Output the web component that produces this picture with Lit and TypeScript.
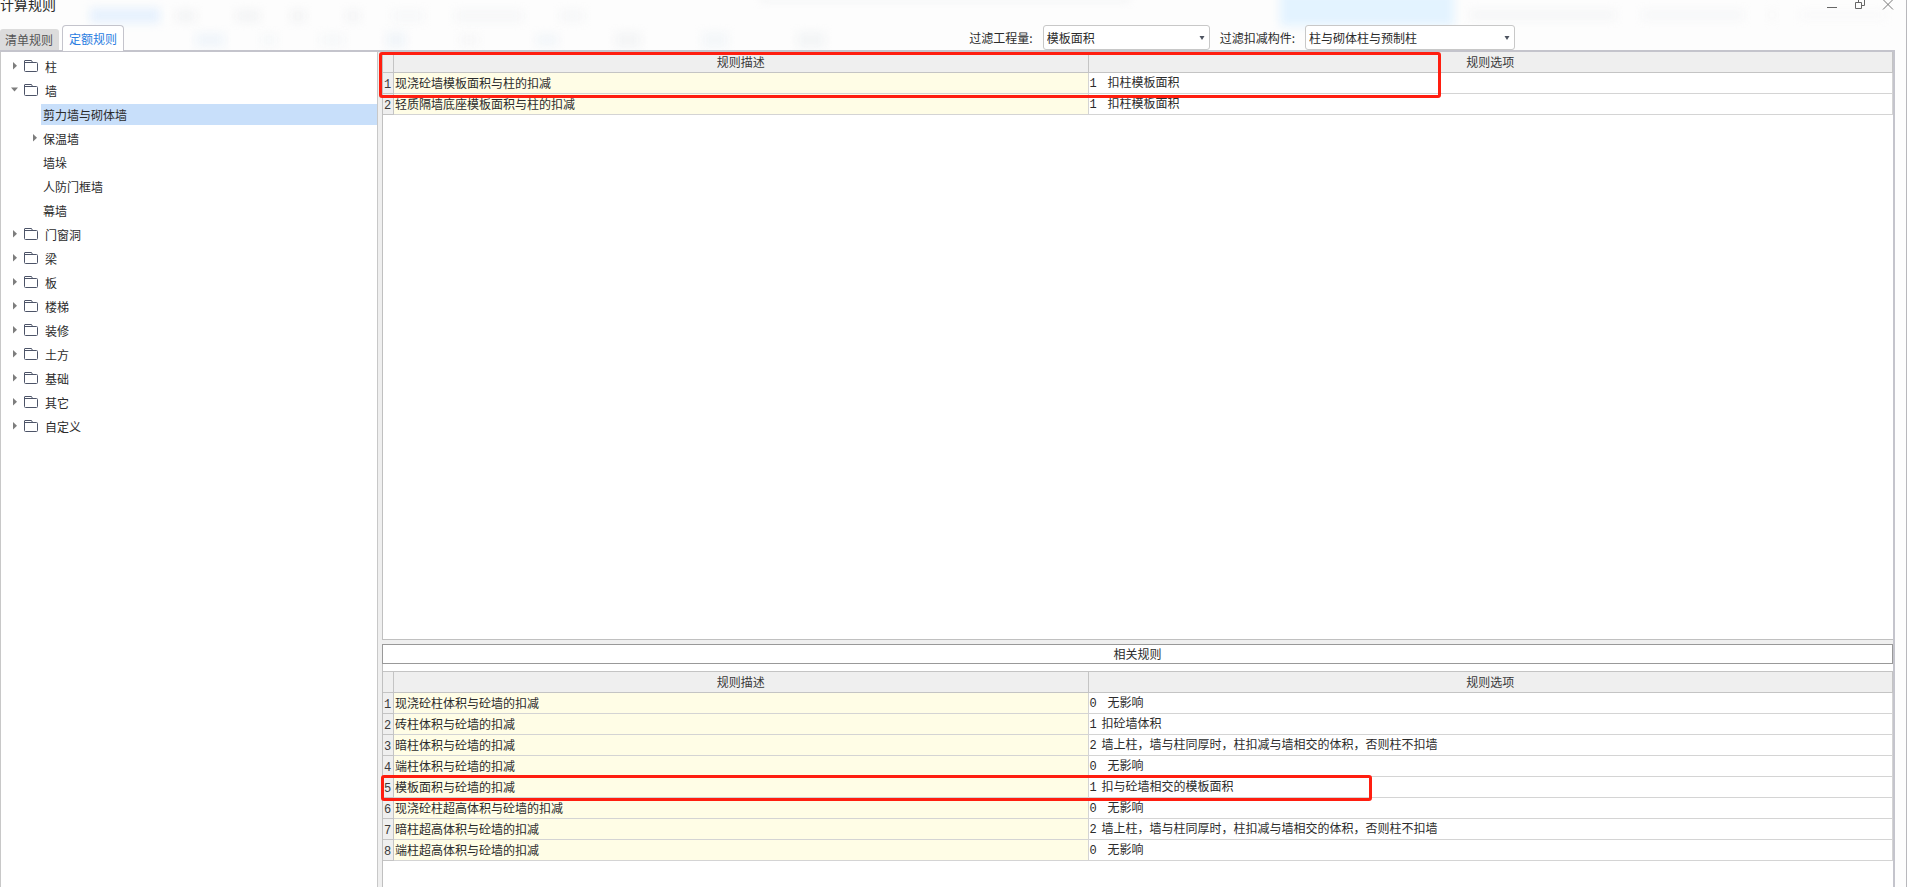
import { LitElement, html, css, svg, nothing } from "lit";
import { customElement, property, state } from "lit/decorators.js";
import { classMap } from "lit/directives/class-map.js";

interface TreeItem {
  label: string;
  children?: TreeItem[];
  expandable?: boolean;
  open?: boolean;
}

interface Rule {
  text: string;
  code: string;
  option: string;
  wide?: boolean;
}

const TREE: TreeItem[] = [
  { label: "柱" },
  {
    label: "墙",
    open: true,
    children: [
      { label: "剪力墙与砌体墙" },
      { label: "保温墙", expandable: true },
      { label: "墙垛" },
      { label: "人防门框墙" },
      { label: "幕墙" },
    ],
  },
  { label: "门窗洞" },
  { label: "梁" },
  { label: "板" },
  { label: "楼梯" },
  { label: "装修" },
  { label: "土方" },
  { label: "基础" },
  { label: "其它" },
  { label: "自定义" },
];

const RULES: Rule[] = [
  { text: "现浇砼墙模板面积与柱的扣减", code: "1", option: "扣柱模板面积", wide: true },
  { text: "轻质隔墙底座模板面积与柱的扣减", code: "1", option: "扣柱模板面积", wide: true },
];

const LONG_OPTION = "墙上柱\uff0c墙与柱同厚时\uff0c柱扣减与墙相交的体积\uff0c否则柱不扣墙";

const RELATED: Rule[] = [
  { text: "现浇砼柱体积与砼墙的扣减", code: "0", option: "无影响", wide: true },
  { text: "砖柱体积与砼墙的扣减", code: "1", option: "扣砼墙体积" },
  { text: "暗柱体积与砼墙的扣减", code: "2", option: LONG_OPTION },
  { text: "端柱体积与砼墙的扣减", code: "0", option: "无影响", wide: true },
  { text: "模板面积与砼墙的扣减", code: "1", option: "扣与砼墙相交的模板面积" },
  { text: "现浇砼柱超高体积与砼墙的扣减", code: "0", option: "无影响", wide: true },
  { text: "暗柱超高体积与砼墙的扣减", code: "2", option: LONG_OPTION },
  { text: "端柱超高体积与砼墙的扣减", code: "0", option: "无影响", wide: true },
];

// Soft shapes showing through the translucent title area: x, y, width, height, colour.
const HAZE: [number, number, number, number, string][] = [
  [90, 8, 70, 15, "#e6f1fd"],
  [176, 10, 20, 12, "#f3f4f5"],
  [236, 10, 24, 12, "#f3f4f5"],
  [291, 10, 14, 12, "#f3f4f5"],
  [346, 10, 14, 12, "#f4f5f6"],
  [392, 10, 32, 12, "#f7f8f9"],
  [455, 10, 68, 12, "#f6f7f8"],
  [560, 10, 24, 12, "#f6f7f8"],
  [196, 33, 28, 14, "#f0f5fa"],
  [262, 34, 14, 12, "#f6f8fa"],
  [320, 34, 24, 12, "#f6f8f9"],
  [386, 32, 20, 16, "#f1f5f9"],
  [460, 34, 18, 12, "#f7f7f8"],
  [536, 34, 22, 12, "#f2f6f9"],
  [615, 32, 26, 16, "#f4f5f6"],
  [702, 32, 26, 16, "#f4f7f9"],
  [797, 32, 28, 16, "#f3f5f6"],
  [760, -4, 370, 5, "#f2f3f4"],
  [1280, -8, 174, 34, "#e3f3ff"],
  [1470, 10, 146, 10, "#f5f6f7"],
  [1642, 10, 102, 10, "#f6f7f8"],
  [1768, 11, 8, 8, "#f8f8f8"],
  [1800, 11, 85, 8, "#f9f9fa"],
];

const FONT = css`"Noto Sans CJK SC", sans-serif`;

@customElement("rule-tree")
export class RuleTree extends LitElement {
  @property({ attribute: false }) items: TreeItem[] = [];
  @state() private selected = "剪力墙与砌体墙";

  static styles = css`
    :host { display: block; padding-top: 2px; background: #fff; }
    ul { list-style: none; margin: 0; padding: 0; }
    .row {
      display: flex; align-items: center; width: 100%; height: 24px; padding: 0 0 0 10px;
      border: 0; background: none; color: #2b2b2b; font: 12px/20px ${FONT}; text-align: left;
    }
    .row.child { padding-left: 30px; }
    .arrow { width: 6px; height: 8px; flex: none; }
    .folder { width: 16px; height: 14px; flex: none; margin: 0 6px; }
    .label { flex: 1; height: 21px; line-height: 21px; }
    .child .label { margin-left: 4px; padding-left: 2px; }
    .selected .label { background: #c8dffa; }
  `;

  private arrow(visible: boolean, open: boolean) {
    return svg`<svg class="arrow" viewBox="0 0 6 8" overflow="visible" aria-hidden="true">
      ${visible
        ? open
          ? svg`<path d="M0 1.500h7L3.500 5.500z" fill="#7d7d7d"/>`
          : svg`<path d="M2 0v7.500L6 3.750z" fill="#7d7d7d"/>`
        : nothing}
    </svg>`;
  }

  private row(item: TreeItem, child: boolean) {
    const cls = classMap({ row: true, child, selected: item.label === this.selected });
    return html`<button class=${cls} type="button" @click=${() => (this.selected = item.label)}>
      ${this.arrow(!child || !!item.expandable, !!item.open)}
      ${child
        ? nothing
        : html`<svg class="folder" viewBox="0 0 16 14" fill="none" stroke="#4d5468" aria-hidden="true">
            <path d="M1.500 3.500V2Q1.500 1.500 2 1.500H8.500L9.500 3.500M1.500 3.500H13.500Q14.500 3.500 14.500 4.500V11.500Q14.500 12.500 13.500 12.500H2.500Q1.500 12.500 1.500 11.500V3" />
          </svg>`}
      <span class="label">${item.label}</span>
    </button>`;
  }

  render() {
    return html`<ul>
      ${this.items.map(
        (item) => html`<li>
          ${this.row(item, false)}
          ${item.children ? html`<ul>${item.children.map((c) => html`<li>${this.row(c, true)}</li>`)}</ul>` : nothing}
        </li>`
      )}
    </ul>`;
  }
}

@customElement("rule-table")
export class RuleTable extends LitElement {
  @property({ attribute: false }) rules: Rule[] = [];

  static styles = css`
    :host { display: block; }
    table {
      width: 100%; table-layout: fixed; border-collapse: separate; border-spacing: 0;
      font: 12px/18px ${FONT}; color: #2b2b2b;
    }
    .col-index { width: 11px; }
    .col-text { width: 46%; }
    th, td { box-sizing: border-box; height: 21px; padding: 0; white-space: nowrap; }
    th {
      background: #efefef; font-weight: 400; color: #3a3a3a;
      border-right: 1px solid #c4c4c4; border-bottom: 1px solid #c4c4c4;
    }
    td { border-right: 1px solid #d4d4d4; border-bottom: 1px solid #d4d4d4; padding-left: 1px; }
    .index { font: 12px/16px "Liberation Mono", monospace; padding: 3px 1px 0 0; }
    .text { background: #fffde6; }
    .code { display: inline-block; width: 12px; font-family: "Liberation Mono", monospace; }
    .code.wide { width: 18px; }
  `;

  render() {
    return html`<table>
      <colgroup><col class="col-index" /><col class="col-text" /><col /></colgroup>
      <thead><tr><th></th><th scope="col">规则描述</th><th scope="col">规则选项</th></tr></thead>
      <tbody>
        ${this.rules.map(
          (r, i) => html`<tr>
            <th class="index" scope="row">${i + 1}</th>
            <td class="text">${r.text}</td>
            <td><span class=${classMap({ code: true, wide: !!r.wide })}>${r.code}</span>${r.option}</td>
          </tr>`
        )}
      </tbody>
    </table>`;
  }
}

@customElement("app-root")
export class AppRoot extends LitElement {
  @state() private tab = "定额规则";

  static styles = css`
    :host {
      display: flex; flex-direction: column; box-sizing: border-box; height: 100vh; overflow: hidden;
      padding-right: 11px; border-right: 1px solid #b8b8bc; background: #fdfdfd;
      font: 12px/18px ${FONT}; color: #2b2b2b; position: relative;
    }
    button, select { font: inherit; }
    .haze { position: absolute; inset: 0 0 auto 0; width: 100%; height: 50px; pointer-events: none; }
    header { flex: none; position: relative; border-bottom: 2px solid #c4c4cc; }
    .titlebar { display: flex; align-items: flex-start; justify-content: space-between; height: 25px; }
    h1 { margin: 0; font-size: 14px; line-height: 8px; font-weight: 400; }
    .controls { display: flex; gap: 12px; }
    .controls button { display: block; width: 16px; height: 12px; padding: 0; border: 0; background: none; }
    .controls svg { display: block; width: 16px; height: 12px; }
    .toolbar { display: flex; justify-content: space-between; height: 25px; }
    .tabs { display: flex; align-items: flex-end; gap: 3px; }
    .tab {
      height: 21px; padding: 0 6px 0 5px; border: 0; border-radius: 3px 3px 0 0;
      background: #dcdcdc; color: #555; line-height: 20px;
    }
    .tab.active {
      height: 26px; margin-bottom: -1px; padding: 0 6px; border: 1px solid #c4c4cc; border-bottom: 0;
      border-radius: 4px 4px 0 0; background: #fff; color: #2a7de1; line-height: 26px;
    }
    .filters { display: flex; align-items: center; gap: 10px; padding-right: 380px; }
    .select { display: flex; align-items: center; position: relative; width: 167px; height: 25px; }
    .select.wide { width: 210px; }
    select {
      appearance: none; box-sizing: border-box; width: 100%; height: 25px; padding: 0 20px 0 3px;
      border: 1px solid #c8c8c8; border-radius: 3px; background: #fff; color: #2b2b2b;
    }
    .caret { position: absolute; right: 5px; width: 6px; height: 4px; pointer-events: none; }
    .body { flex: 1; min-height: 0; display: flex; background: #efefef; border-right: 2px solid #c4c4cc; }
    rule-tree { flex: none; box-sizing: border-box; width: 378px; border: 1px solid #c8c8c8; border-width: 0 1px; }
    .panes { flex: 1; min-width: 0; display: flex; flex-direction: column; gap: 4px; margin-left: 4px; }
    .pane { position: relative; border-left: 1px solid #c0c0c0; background: #fff; }
    .main { flex: 1; border-bottom: 1px solid #c0c0c0; }
    .related { flex: none; padding-bottom: 26px; }
    h2 {
      margin: 0 0 7px -1px; border: 1px solid #999; background: #fff;
      font-size: 12px; line-height: 18px; font-weight: 400; text-align: center;
    }
    .related rule-table { border-top: 1px solid #c4c4c4; }
    .mark {
      position: absolute; box-sizing: border-box; border: 3px solid #ff1e10; border-radius: 3px;
      pointer-events: none;
    }
    .mark.first { left: -4px; top: 0; width: 1062px; height: 46px; }
    .mark.second { left: -2px; top: 131px; width: 991px; height: 26px; }
  `;

  private select(id: string, value: string, wide = false) {
    return html`<span class=${classMap({ select: true, wide })}>
      <select id=${id}><option>${value}</option></select>
      <svg class="caret" viewBox="0 0 6 4" aria-hidden="true"><path d="M0.500 0h5L3 4z" fill="#4d5360" /></svg>
    </span>`;
  }

  render() {
    return html`
      <svg class="haze" aria-hidden="true">
        <defs><filter id="soft" x="-50%" y="-150%" width="200%" height="400%" color-interpolation-filters="sRGB"><feGaussianBlur stdDeviation="5" /></filter></defs>
        ${HAZE.map(([x, y, w, h, c]) => svg`<rect x=${x} y=${y} width=${w} height=${h} fill=${c} filter="url(#soft)"/>`)}
      </svg>
      <header>
        <div class="titlebar">
          <h1>计算规则</h1>
          <div class="controls">
            <button type="button" aria-label="最小化"><svg viewBox="0 0 16 12" stroke="#666"><path d="M4 7.500h10" /></svg></button>
            <button type="button" aria-label="还原"><svg viewBox="0 0 16 12" stroke="#666" fill="none"><path d="M4.500 2.500h6v6h-6zM7.500 2.500v-3M13.500 -1v6.500h-3" /></svg></button>
            <button type="button" aria-label="关闭"><svg viewBox="0 0 16 12" stroke="#777"><path d="M4 -0.500l10 10M14 -0.500l-10 10" /></svg></button>
          </div>
        </div>
        <div class="toolbar">
          <div class="tabs" role="tablist">
            ${["清单规则", "定额规则"].map(
              (t) => html`<button type="button" role="tab" aria-selected=${t === this.tab}
                class=${classMap({ tab: true, active: t === this.tab })} @click=${() => (this.tab = t)}>${t}</button>`
            )}
          </div>
          <div class="filters">
            <label for="quantity">过滤工程量:</label>
            ${this.select("quantity", "模板面积")}
            <label for="member">过滤扣减构件:</label>
            ${this.select("member", "柱与砌体柱与预制柱", true)}
          </div>
        </div>
      </header>
      <div class="body">
        <rule-tree .items=${TREE}></rule-tree>
        <div class="panes">
          <section class="pane main">
            <rule-table .rules=${RULES}></rule-table>
            <div class="mark first"></div>
          </section>
          <section class="pane related">
            <h2>相关规则</h2>
            <rule-table .rules=${RELATED}></rule-table>
            <div class="mark second"></div>
          </section>
        </div>
      </div>
    `;
  }
}
